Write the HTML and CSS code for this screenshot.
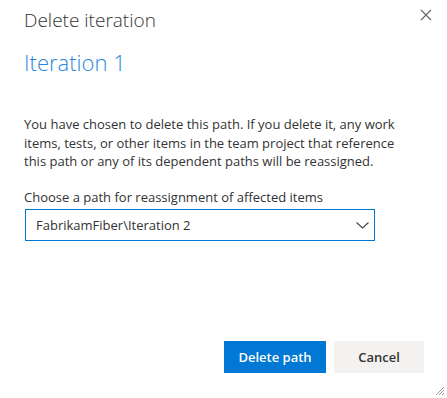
FILE: index.html
```html
<!DOCTYPE html>
<html lang="en">
<head>
    <meta charset="UTF-8">
    <title>Delete iteration</title>
    <link rel="stylesheet" href="styles.css">
</head>
<body>
    <div class="dialog">
        <div class="dialog-header">
            <h1 class="dialog-title">Delete iteration</h1>
            <button class="close-button" title="Close">
                <svg width="12" height="12" viewBox="0 0 12 12"><path d="M1 1 L11 11 M11 1 L1 11" stroke="#666" stroke-width="1.2" fill="none"/></svg>
            </button>
        </div>
        <div class="dialog-body">
            <h2 class="node-name">Iteration 1</h2>
            <p class="message">You have chosen to delete this path. If you delete it, any work items, tests, or other items in the team project that reference this path or any of its dependent paths will be reassigned.</p>
            <label class="field-label">Choose a path for reassignment of affected items</label>
            <div class="path-picker">
                <span class="path-value">FabrikamFiber\Iteration 2</span>
                <svg class="chevron" width="13" height="7" viewBox="0 0 13 7"><path d="M0.5 0.5 L6.5 6 L12.5 0.5" stroke="#444" stroke-width="1.1" fill="none"/></svg>
            </div>
        </div>
        <div class="dialog-footer">
            <button class="btn btn-primary">Delete path</button>
            <button class="btn btn-default">Cancel</button>
        </div>
        <svg class="grip" width="10" height="10" viewBox="0 0 10 10"><path d="M9 1 L1 9 M9 4 L4 9 M9 7 L7 9" stroke="#999" stroke-width="1" fill="none"/></svg>
    </div>
</body>
</html>
```

FILE: styles.css
```css
* {
    margin: 0;
    padding: 0;
    box-sizing: border-box;
}
body {
    font-family: 'Segoe UI', 'Open Sans', sans-serif;
    background: #fff;
    color: #333;
}
.dialog {
    position: relative;
    width: 447px;
    height: 398px;
    display: flex;
    flex-direction: column;
}
.dialog-header {
    display: flex;
    justify-content: space-between;
    align-items: flex-start;
    padding: 6px 14px 0 24px;
}
.dialog-title {
    font-size: 19px;
    font-weight: 300;
    line-height: 28px;
    color: #333;
}
.close-button {
    background: none;
    border: none;
    width: 14px;
    height: 14px;
    margin-top: 3px;
    cursor: pointer;
}
.dialog-body {
    padding: 0 24px;
    flex: 1;
}
.node-name {
    font-size: 22px;
    font-weight: 300;
    color: #2b88d8;
    line-height: 30px;
    margin-top: 13px;
}
.message {
    font-size: 13px;
    line-height: 18.5px;
    margin-top: 38px;
    width: 390px;
}
.field-label {
    display: block;
    font-size: 13px;
    line-height: 18px;
    margin-top: 17px;
}
.path-picker {
    display: flex;
    align-items: center;
    justify-content: space-between;
    width: 350px;
    height: 32px;
    margin: 3px 0 0 1px;
    padding: 0 5px 0 10px;
    border: 1px solid #0078d4;
    font-size: 13px;
}
.chevron {
    margin-top: 1px;
}
.dialog-footer {
    display: flex;
    justify-content: flex-end;
    gap: 8px;
    padding: 0 23px 25px 0;
}
.btn {
    height: 32px;
    border: none;
    font-family: inherit;
    font-size: 13px;
    font-weight: 600;
    cursor: pointer;
}
.btn-primary {
    width: 102px;
    background: #0078d4;
    color: #fff;
}
.btn-default {
    width: 90px;
    background: #f3f2f1;
    color: #333;
}
.grip {
    position: absolute;
    right: 2px;
    bottom: 2px;
}
```
